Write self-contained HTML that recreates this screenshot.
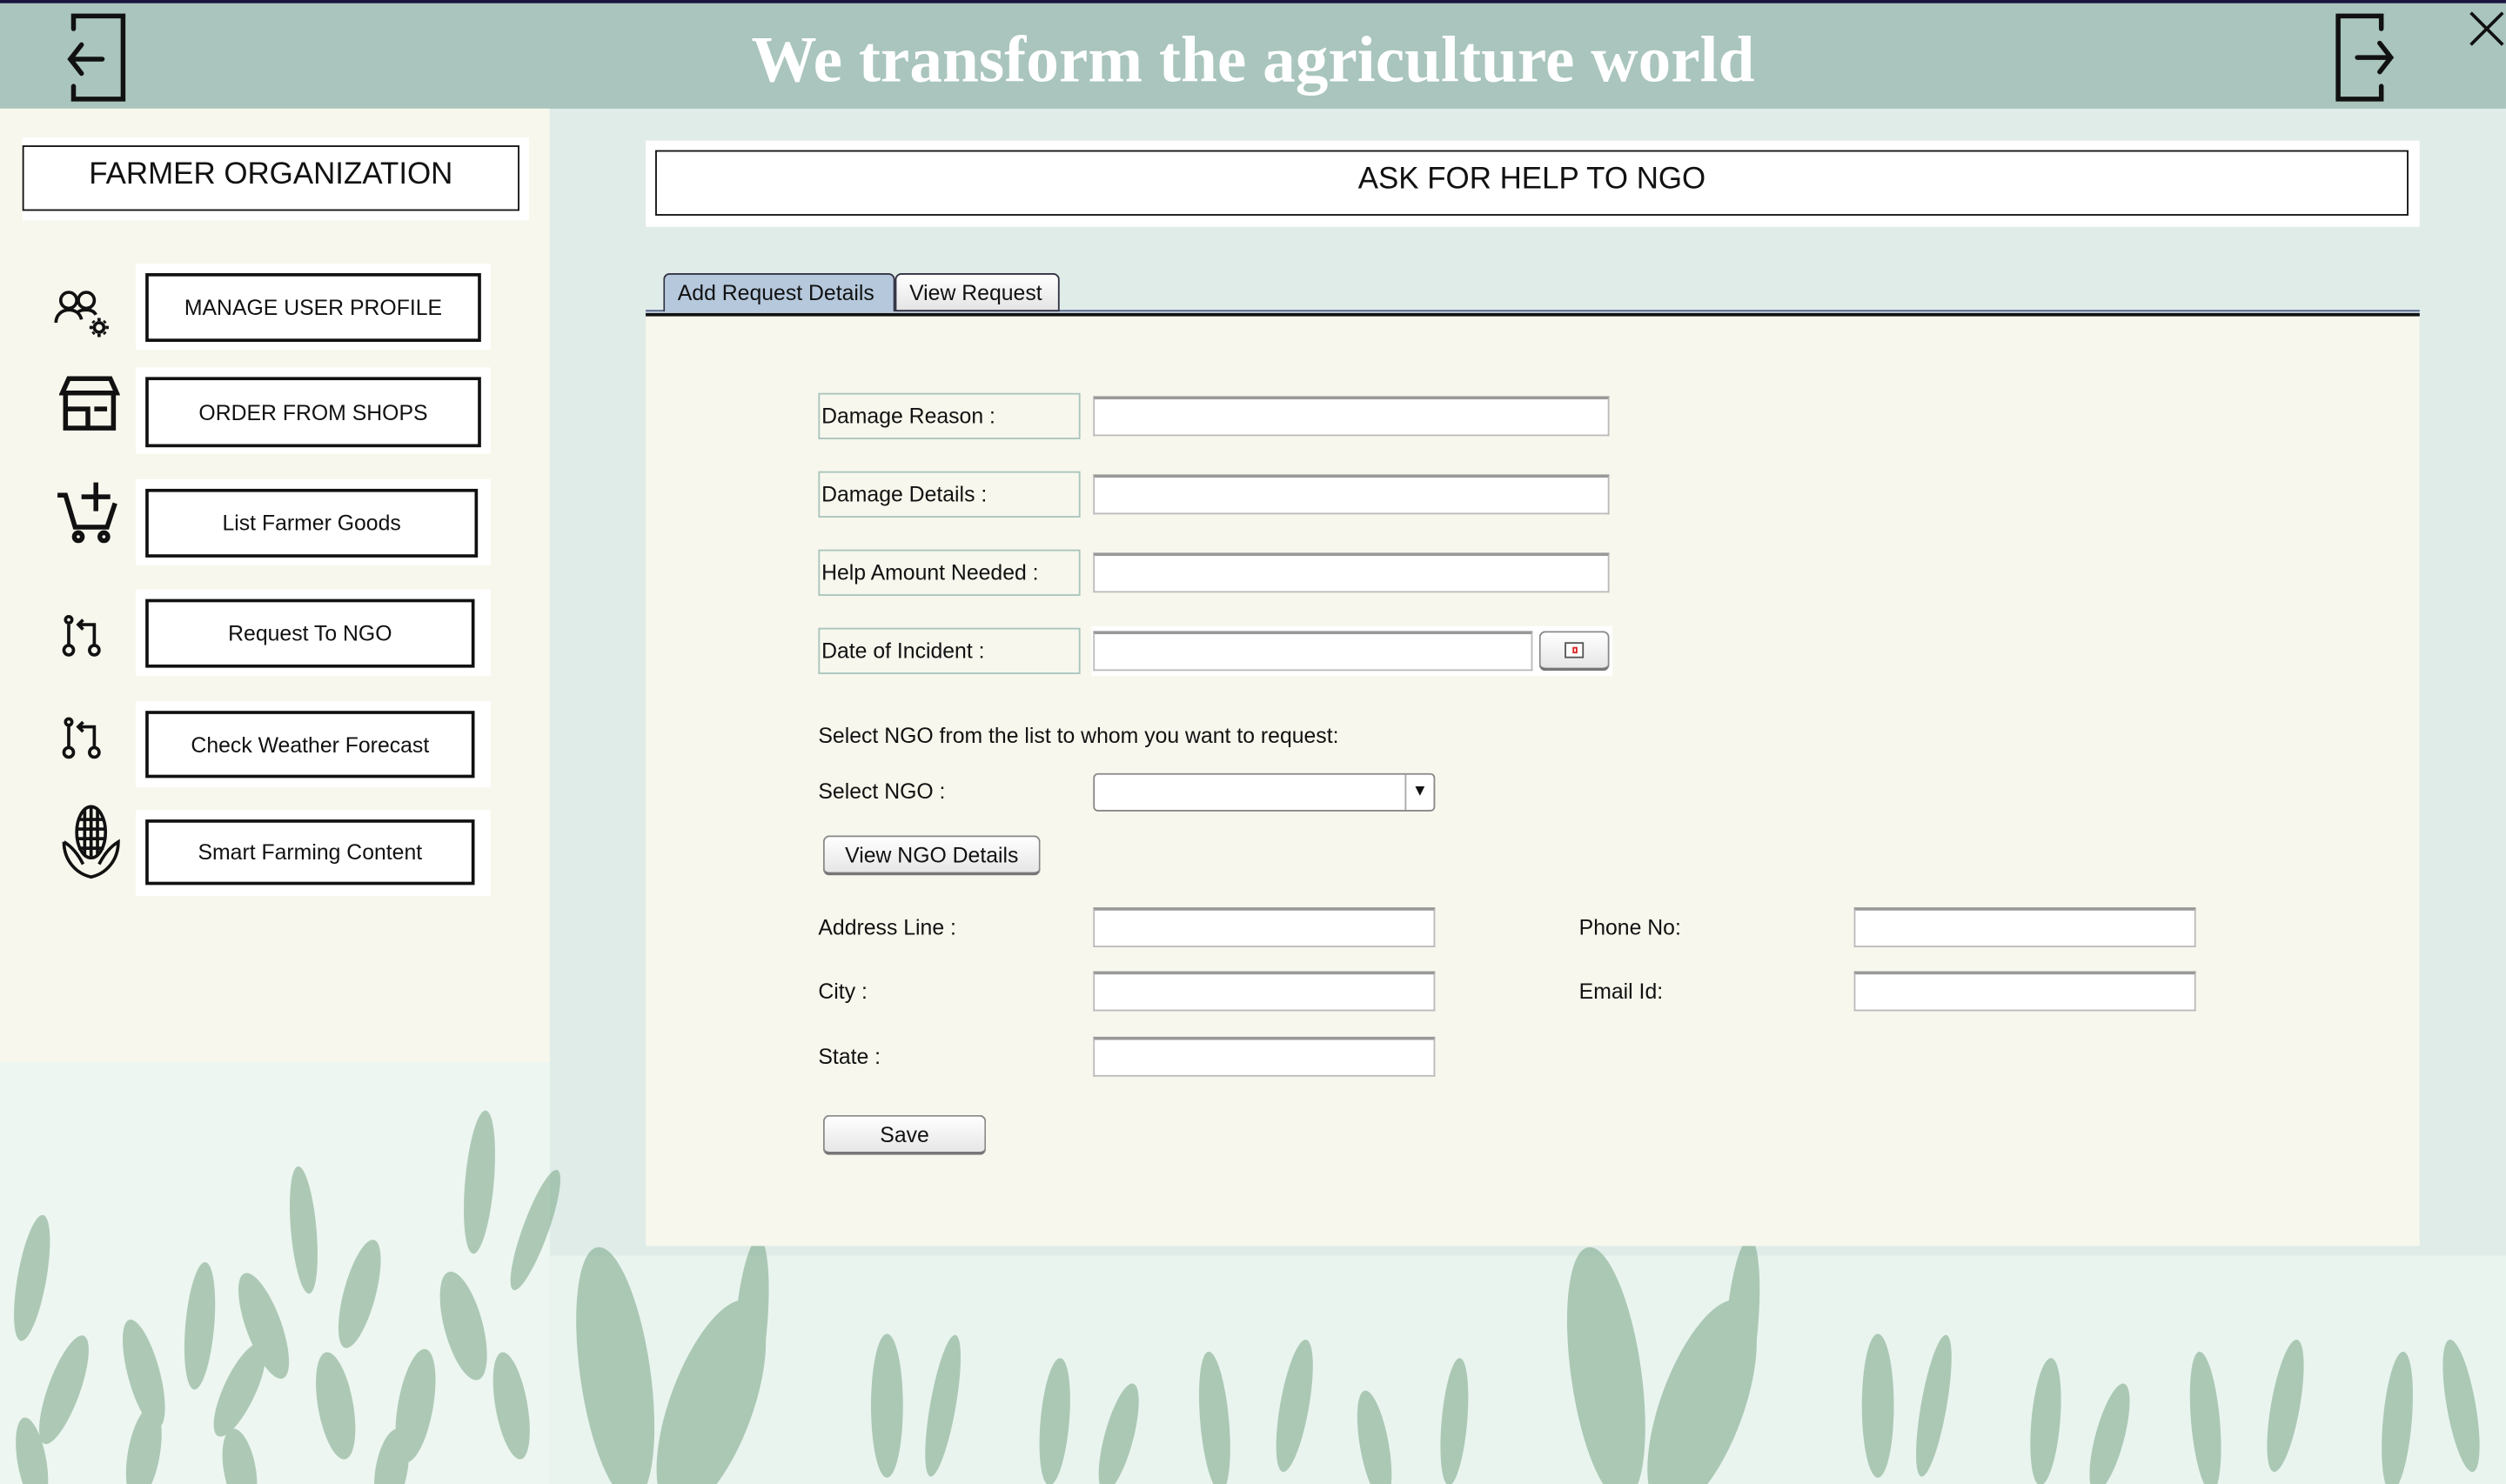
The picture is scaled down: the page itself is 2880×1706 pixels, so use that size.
<!DOCTYPE html>
<html><head><meta charset="utf-8"><style>
*{margin:0;padding:0;box-sizing:border-box}
html,body{width:2880px;height:1706px;overflow:hidden;background:#dfece8}
#w{position:absolute;left:0;top:0;width:1568px;height:929px;transform:scale(1.8367,1.8364);transform-origin:0 0;font-family:"Liberation Sans",sans-serif;color:#111;white-space:nowrap}
.a{position:absolute}
.hdr{left:0;top:0;width:1568px;height:68px;background:#a9c5bd;border-top:2px solid #1a1440}
.title{left:0;width:1568px;top:13px;text-align:center;font-family:"Liberation Serif",serif;font-size:41px;color:#fff;font-weight:bold}
.side{left:0;top:68px;width:344px;height:597px;background:#f7f7ed}
.wb{background:#fff}
.bx{border:2px solid #111;background:#fff;display:flex;align-items:center;justify-content:center;font-size:13.5px}
.lbl{border:1px solid #a9c5bd;font-size:13.5px;display:flex;align-items:center;padding-left:1px}
.inp{background:#fff;border:1px solid #bbb;border-top:2px solid #999}
.t{font-size:13.5px}
.btn{border:1px solid #888;border-radius:4px;background:linear-gradient(#fff,#e6e6e6);display:flex;align-items:center;justify-content:center;font-size:13.5px;border-bottom:2px solid #777}
</style></head><body><div id="w">
<div class="a hdr"></div>
<div class="a title">We transform the agriculture world</div>
<svg class="a" style="left:38px;top:6px" width="44" height="58" viewBox="0 0 44 58" fill="none" stroke="#111" stroke-width="3" stroke-linecap="round"><path d="M8 12V4h31v52H8v-8"/><path d="M6 31h20M13 22l-7 9 7 9"/></svg>
<svg class="a" style="left:1458px;top:6px" width="44" height="58" viewBox="0 0 44 58" fill="none" stroke="#111" stroke-width="3" stroke-linecap="round"><path d="M32 12V4H5v52h27v-8"/><path d="M17 30h21M31 21l7 9-7 9"/></svg>
<svg class="a" style="left:1543px;top:5px" width="26" height="26" viewBox="0 0 26 26" stroke="#111" stroke-width="2"><path d="M3 3l20 20M23 3L3 23"/></svg>

<div class="a side"></div>
<div class="a" style="left:0;top:665px;width:344px;height:264px;background:#edf6f1"></div>
<div class="a" style="left:344px;top:786px;width:1224px;height:143px;background:#e9f4ef"></div>
<svg class="a" style="left:0;top:665px" width="1568" height="264" viewBox="0 665 1568 264">
<g fill="#6f9d7d" opacity="0.5">
<ellipse cx="300" cy="740" rx="9" ry="45" transform="rotate(5 300 740)"/>
<ellipse cx="335" cy="770" rx="8" ry="40" transform="rotate(20 335 770)"/>
<ellipse cx="190" cy="770" rx="8" ry="40" transform="rotate(-5 190 770)"/>
<ellipse cx="225" cy="810" rx="10" ry="35" transform="rotate(15 225 810)"/>
<ellipse cx="165" cy="830" rx="11" ry="35" transform="rotate(-20 165 830)"/>
<ellipse cx="290" cy="830" rx="12" ry="35" transform="rotate(-15 290 830)"/>
<ellipse cx="125" cy="830" rx="9" ry="40" transform="rotate(5 125 830)"/>
<ellipse cx="90" cy="860" rx="10" ry="35" transform="rotate(-15 90 860)"/>
<ellipse cx="150" cy="870" rx="10" ry="32" transform="rotate(25 150 870)"/>
<ellipse cx="20" cy="800" rx="9" ry="40" transform="rotate(10 20 800)"/>
<ellipse cx="40" cy="870" rx="10" ry="36" transform="rotate(20 40 870)"/>
<ellipse cx="210" cy="880" rx="11" ry="34" transform="rotate(-10 210 880)"/>
<ellipse cx="260" cy="880" rx="11" ry="36" transform="rotate(10 260 880)"/>
<ellipse cx="320" cy="880" rx="10" ry="34" transform="rotate(-10 320 880)"/>
<ellipse cx="90" cy="910" rx="10" ry="30" transform="rotate(10 90 910)"/>
<ellipse cx="20" cy="915" rx="9" ry="28" transform="rotate(-10 20 915)"/>
<ellipse cx="150" cy="920" rx="10" ry="26" transform="rotate(-10 150 920)"/>
<ellipse cx="245" cy="920" rx="10" ry="26" transform="rotate(10 245 920)"/>
<ellipse cx="385" cy="860" rx="22" ry="80" transform="rotate(-8 385 860)"/>
<ellipse cx="445" cy="880" rx="26" ry="70" transform="rotate(20 445 880)"/>
<ellipse cx="470" cy="830" rx="10" ry="55" transform="rotate(5 470 830)"/>
<ellipse cx="555" cy="880" rx="10" ry="45"/>
<ellipse cx="590" cy="880" rx="8" ry="45" transform="rotate(10 590 880)"/>
<ellipse cx="660" cy="890" rx="9" ry="40" transform="rotate(5 660 890)"/>
<ellipse cx="700" cy="900" rx="9" ry="35" transform="rotate(15 700 900)"/>
<ellipse cx="760" cy="890" rx="9" ry="44" transform="rotate(-5 760 890)"/>
<ellipse cx="810" cy="880" rx="9" ry="42" transform="rotate(10 810 880)"/>
<ellipse cx="860" cy="905" rx="9" ry="35" transform="rotate(-10 860 905)"/>
<ellipse cx="910" cy="890" rx="8" ry="40" transform="rotate(5 910 890)"/>
<ellipse cx="1005" cy="860" rx="22" ry="80" transform="rotate(-8 1005 860)"/>
<ellipse cx="1065" cy="880" rx="26" ry="70" transform="rotate(20 1065 880)"/>
<ellipse cx="1090" cy="830" rx="10" ry="55" transform="rotate(5 1090 830)"/>
<ellipse cx="1175" cy="880" rx="10" ry="45"/>
<ellipse cx="1210" cy="880" rx="8" ry="45" transform="rotate(10 1210 880)"/>
<ellipse cx="1280" cy="890" rx="9" ry="40" transform="rotate(5 1280 890)"/>
<ellipse cx="1320" cy="900" rx="9" ry="35" transform="rotate(15 1320 900)"/>
<ellipse cx="1380" cy="890" rx="9" ry="44" transform="rotate(-5 1380 890)"/>
<ellipse cx="1430" cy="880" rx="9" ry="42" transform="rotate(10 1430 880)"/>
<ellipse cx="1500" cy="890" rx="9" ry="44" transform="rotate(5 1500 890)"/>
<ellipse cx="1540" cy="880" rx="9" ry="42" transform="rotate(-10 1540 880)"/>
</g></svg>

<div class="a wb" style="left:14px;top:86px;width:317px;height:52px"></div>
<div class="a bx" style="left:14px;top:91px;width:311px;height:41px;font-size:19px;border-width:1.5px;padding-bottom:4px">FARMER ORGANIZATION</div>

<div class="a wb" style="left:85px;top:165px;width:222px;height:54px"></div>
<div class="a bx" style="left:91px;top:171px;width:210px;height:43px">MANAGE USER PROFILE</div>
<div class="a wb" style="left:85px;top:230px;width:222px;height:54px"></div>
<div class="a bx" style="left:91px;top:236px;width:210px;height:44px">ORDER FROM SHOPS</div>
<div class="a wb" style="left:85px;top:300px;width:222px;height:54px"></div>
<div class="a bx" style="left:91px;top:306px;width:208px;height:43px">List Farmer Goods</div>
<div class="a wb" style="left:85px;top:369px;width:222px;height:54px"></div>
<div class="a bx" style="left:91px;top:375px;width:206px;height:43px">Request To NGO</div>
<div class="a wb" style="left:85px;top:439px;width:222px;height:54px"></div>
<div class="a bx" style="left:91px;top:445px;width:206px;height:42px">Check Weather Forecast</div>
<div class="a wb" style="left:85px;top:507px;width:222px;height:54px"></div>
<div class="a bx" style="left:91px;top:513px;width:206px;height:41px">Smart Farming Content</div>

<svg class="a" style="left:33px;top:180px" width="38" height="34" viewBox="0 0 38 34" fill="none" stroke="#111" stroke-width="2"><circle cx="10" cy="8" r="5"/><circle cx="21" cy="8" r="5"/><path d="M2 22c0-5 4-8 8-8s7 2 8 6M15 16c2-2 4-2 6-2 3 0 5 1 6 3"/><circle cx="29" cy="25" r="3"/><path d="M29 19v2M29 29v2M23 25h2M33 25h2M25 21l1 1M32 28l1 1M25 29l1-1M32 22l1-1"/></svg>
<svg class="a" style="left:37px;top:234px" width="38" height="36" viewBox="0 0 38 36" fill="none" stroke="#111" stroke-width="3"><path d="M6 3h26l4 9H2z"/><path d="M4 12v22h30V12M4 22h14v12M22 22h8"/></svg>
<svg class="a" style="left:35px;top:300px" width="40" height="40" viewBox="0 0 40 40" fill="none" stroke="#111" stroke-width="3"><path d="M1 10h5l6 20h20l5-15"/><path d="M25 2v18M16 11h18"/><circle cx="14" cy="36" r="2.5"/><circle cx="30" cy="36" r="2.5"/></svg>
<svg class="a" style="left:37px;top:383px" width="28" height="30" viewBox="0 0 28 30" fill="none" stroke="#111" stroke-width="2"><circle cx="6" cy="24" r="3"/><circle cx="22" cy="24" r="3"/><circle cx="6" cy="5" r="2"/><path d="M6 8v13M22 21V8h-10M15 5l-3 3 3 3"/></svg>
<svg class="a" style="left:37px;top:447px" width="28" height="30" viewBox="0 0 28 30" fill="none" stroke="#111" stroke-width="2"><circle cx="6" cy="24" r="3"/><circle cx="22" cy="24" r="3"/><circle cx="6" cy="5" r="2"/><path d="M6 8v13M22 21V8h-10M15 5l-3 3 3 3"/></svg>
<svg class="a" style="left:37px;top:503px" width="40" height="48" viewBox="0 0 40 48" fill="none" stroke="#111" stroke-width="2"><ellipse cx="20" cy="18" rx="9" ry="16"/><path d="M12 10h16M11 16h18M11 22h18M12 28h16M16 4v28M20 2v31M24 4v28"/><path d="M3 24c0 12 8 20 17 22c9-2 17-10 17-22c-5 3-9 8-12 14M3 24c5 3 9 8 12 14"/></svg>

<div class="a wb" style="left:404px;top:88px;width:1110px;height:54px"></div>
<div class="a bx" style="left:410px;top:94px;width:1097px;height:41px;font-size:19px;border-width:1.5px;padding-bottom:4px">ASK FOR HELP TO NGO</div>

<div class="a" style="left:404px;top:194px;width:1110px;height:586px;background:#f7f7ed"></div>
<div class="a" style="left:404px;top:194px;width:1110px;height:4px;border-top:1px solid #5a6a8a;border-bottom:2px solid #111;background:#c0d0e0"></div>
<div class="a" style="left:415px;top:171px;width:145px;height:24px;background:#b5c8dc;border:1px solid #334;border-bottom:none;border-radius:4px 4px 0 0;font-size:13.5px;padding:4px 0 0 8px">Add Request Details</div>
<div class="a" style="left:560px;top:171px;width:103px;height:24px;background:linear-gradient(#fff,#e4e4e4);border:1px solid #334;border-radius:4px 4px 0 0;font-size:13.5px;padding:4px 0 0 8px">View Request</div>

<div class="a lbl" style="left:512px;top:246px;width:164px;height:29px">Damage Reason :</div>
<div class="a inp" style="left:684px;top:248px;width:323px;height:25px"></div>
<div class="a lbl" style="left:512px;top:295px;width:164px;height:29px">Damage Details :</div>
<div class="a inp" style="left:684px;top:297px;width:323px;height:25px"></div>
<div class="a lbl" style="left:512px;top:344px;width:164px;height:29px">Help Amount Needed :</div>
<div class="a inp" style="left:684px;top:346px;width:323px;height:25px"></div>
<div class="a lbl" style="left:512px;top:393px;width:164px;height:29px">Date of Incident :</div>
<div class="a" style="left:683px;top:392px;width:326px;height:31px;background:#fff"></div>
<div class="a inp" style="left:684px;top:395px;width:275px;height:25px"></div>
<div class="a btn" style="left:963px;top:395px;width:44px;height:25px"><div style="width:12px;height:10px;border:1px solid #555;background:#fff;position:relative"><div style="position:absolute;left:4px;top:2px;width:3px;height:4px;border:1px solid #d22"></div></div></div>

<div class="a t" style="left:512px;top:453px">Select NGO from the list to whom you want to request:</div>
<div class="a t" style="left:512px;top:488px">Select NGO :</div>
<div class="a" style="left:684px;top:484px;width:214px;height:24px;background:#fff;border:1px solid #888;border-radius:3px"><div style="position:absolute;right:0;top:0;width:18px;height:22px;border-left:1px solid #aaa;font-size:10px;text-align:center;line-height:22px">▼</div></div>
<div class="a btn" style="left:515px;top:523px;width:136px;height:25px">View NGO Details</div>

<div class="a t" style="left:512px;top:573px">Address Line :</div>
<div class="a inp" style="left:684px;top:568px;width:214px;height:25px"></div>
<div class="a t" style="left:512px;top:613px">City :</div>
<div class="a inp" style="left:684px;top:608px;width:214px;height:25px"></div>
<div class="a t" style="left:512px;top:654px">State :</div>
<div class="a inp" style="left:684px;top:649px;width:214px;height:25px"></div>
<div class="a t" style="left:988px;top:573px">Phone No:</div>
<div class="a inp" style="left:1160px;top:568px;width:214px;height:25px"></div>
<div class="a t" style="left:988px;top:613px">Email Id:</div>
<div class="a inp" style="left:1160px;top:608px;width:214px;height:25px"></div>
<div class="a btn" style="left:515px;top:698px;width:102px;height:25px">Save</div>
</div></body></html>
